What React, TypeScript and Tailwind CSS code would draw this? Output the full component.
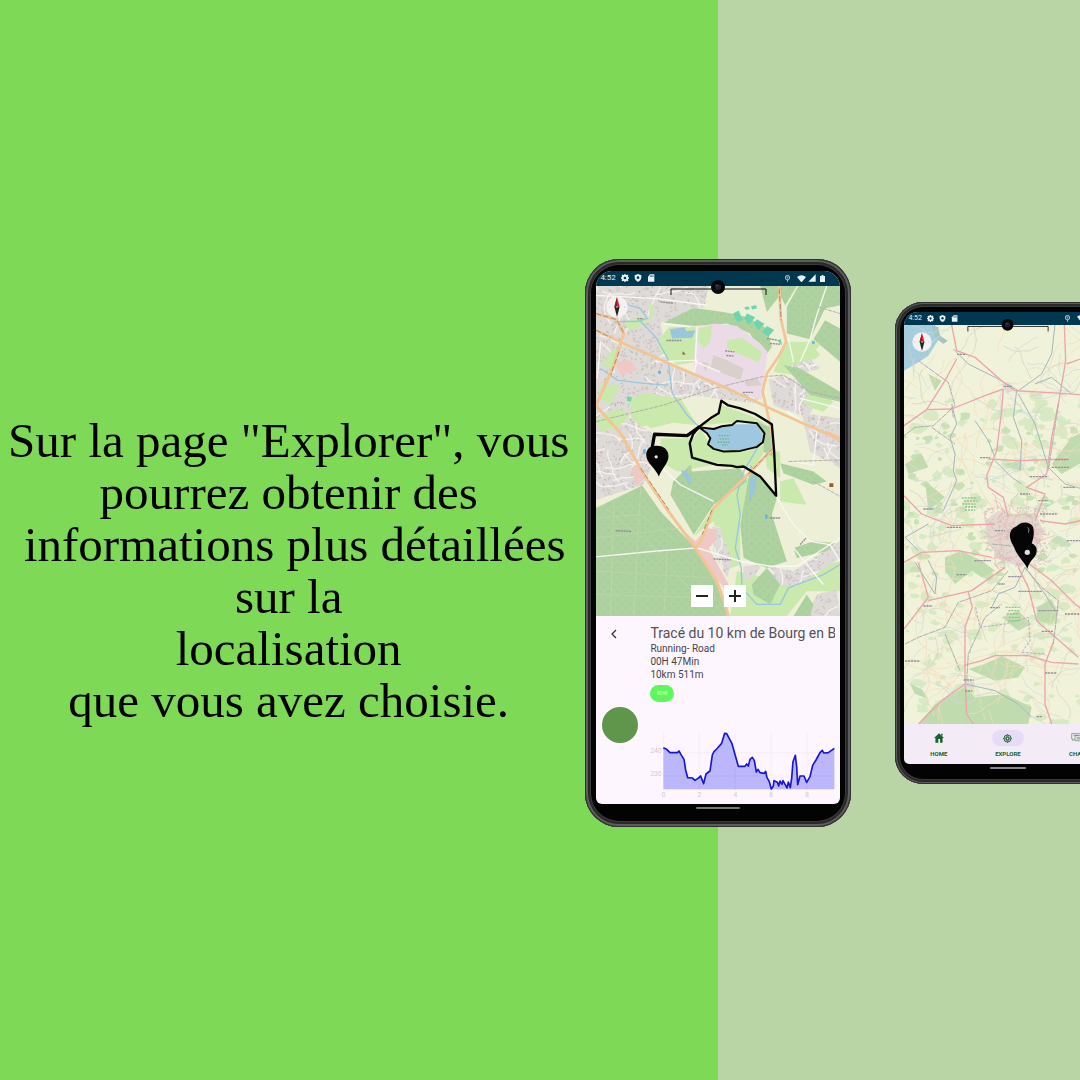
import React from "react";

function makeRandom(seed: number) {
  let s = seed;
  return () => {
    s = (s * 16807) % 2147483647;
    return s / 2147483647;
  };
}

function speckles(seed: number, count: number, x: number, y: number, w: number, h: number, size: number) {
  const r = makeRandom(seed);
  let d = "";
  for (let i = 0; i < count; i++) {
    const px = x + r() * w;
    const py = y + r() * h;
    const a = r() * 6.28;
    const l = size * (0.5 + r());
    d += `M${px.toFixed(0)} ${py.toFixed(0)}l${(Math.cos(a) * l).toFixed(0)} ${(Math.sin(a) * l).toFixed(0)}`;
  }
  return d;
}

function wanderingLines(seed: number, count: number, x: number, y: number, w: number, h: number, step: number) {
  const r = makeRandom(seed);
  let d = "";
  for (let i = 0; i < count; i++) {
    let px = x + r() * w;
    let py = y + r() * h;
    let a = r() * 6.28;
    d += `M${px.toFixed(0)} ${py.toFixed(0)}`;
    for (let k = 0; k < 7; k++) {
      a += (r() - 0.5) * 1.1;
      px += Math.cos(a) * step;
      py += Math.sin(a) * step;
      d += `L${px.toFixed(0)} ${py.toFixed(0)}`;
    }
  }
  return d;
}

function blobs(seed: number, count: number, x: number, y: number, w: number, h: number, size: number) {
  const r = makeRandom(seed);
  let d = "";
  for (let i = 0; i < count; i++) {
    const cx = x + r() * w;
    const cy = y + r() * h;
    const s = size * (0.4 + r());
    for (let k = 0; k < 8; k++) {
      const a = (k / 8) * 6.28;
      const m = s * (0.5 + r() * 0.7);
      d += `${k ? "L" : "M"}${(cx + Math.cos(a) * m * 1.4).toFixed(0)} ${(cy + Math.sin(a) * m).toFixed(0)}`;
    }
    d += "Z";
  }
  return d;
}

const TOWN =
  "M46 102H385L372 165 240 214 262 330 345 368 540 440 520 455 330 430 200 470 46 510Z M46 500L90 490 150 500 215 545 215 640 190 700 46 745Z M565 385L600 372 650 385 690 420 670 450 620 478 580 460Z M625 345L700 320 720 350 660 365Z M665 485L780 500V650L690 600Z M565 945L640 960 780 870V920L650 1005 590 1000Z M395 820L420 830 455 930 440 980 400 900Z M490 945L545 940 520 980 490 990Z M680 1095L710 1030 770 1015 780 1095Z M590 460L650 440 700 470 680 500Z";

const WOODS =
  "M250 212L340 168 430 180 500 195 560 230 575 285 550 320 510 245 440 215 340 222Z M540 102H650L615 160 600 130 560 180Z M620 165L655 102H780V160L735 170 690 262 620 245Z M735 205L780 230V330L700 262Z M46 770L185 702 240 780 345 890 405 990 445 1095H46Z M278 690L330 640 335 660 480 650 500 690 400 760 340 850 270 730Z M480 820L510 650 545 680 590 740 575 790 620 930 560 950 490 920Z M530 510L578 530 585 620 550 600 550 550Z M610 340L660 350 780 420V450L690 430Z M600 635L700 660 740 690 700 700 610 665Z M640 890L700 870 765 875 740 900 650 920Z M515 1000L560 950 600 1000 570 1060 520 1030Z M640 1095L680 1030 700 1060 690 1095Z";

const LAWN =
  "M150 490L190 440 300 440 345 520 250 510 160 530Z M46 400L120 395 90 470 60 460Z M60 345L100 290 120 300 100 350Z M230 270L270 225 345 225 350 310 260 330Z M120 215L180 190 210 215 150 240Z M200 150L220 160 210 210Z M355 230L390 235 385 280 355 275Z M620 270L690 270 720 310 640 370 580 360Z M240 560L340 560 335 620 400 640 290 660 240 630Z M340 855L480 650 520 700 480 800 480 940 430 960 400 810Z M330 575L360 530 390 580 500 600 575 570 520 650 430 640 340 620Z M600 690L640 680 680 760 600 750Z M470 960L560 980 780 930V1020L680 1020 620 1095H450Z M640 450L700 410 760 450 730 480Z M555 600L600 600 600 680 560 650Z M690 260L720 280 700 300Z M370 520L415 490 425 460 530 500 560 520 480 510Z";

function TrailMap() {
  return (
    <svg viewBox="46 102 734 993" className="block h-auto w-full" role="img" aria-label="Carte du tracé">
      <defs>
        <clipPath id="town-clip">
          <path d={TOWN} />
        </clipPath>
        <pattern id="wood-dots" width="26" height="26" patternUnits="userSpaceOnUse">
          <rect width="26" height="26" fill="#add19f" />
          <path d="M4 6h4M17 18h4" stroke="#9cc592" strokeWidth="3" />
        </pattern>
      </defs>
      <rect x="46" y="102" width="734" height="993" fill="#edf0d6" />
      <path d={LAWN} fill="#c9e9ad" />
      <path d={TOWN} fill="#dedad8" />
      <g clipPath="url(#town-clip)" fill="none">
        <path d={speckles(7, 2500, 46, 102, 734, 993, 8)} stroke="#cdc6c3" strokeWidth="4" />
        <path d={wanderingLines(15, 190, 46, 102, 734, 993, 15)} stroke="#f4f1ee" strokeWidth="4" />
        <path d={speckles(21, 700, 46, 102, 734, 993, 5)} stroke="#b7aeac" strokeWidth="3" />
      </g>
      <path d="M46 505L110 470 150 490 110 530 60 540Z M150 440L195 425 300 440 350 520 290 510 210 530 150 480Z M55 400L120 398 90 460 55 440Z M60 340L100 290 115 300 95 350Z M235 265L265 225 345 225 350 330 290 340 240 300Z M125 215L180 190 205 210 150 235Z M205 150L220 165 208 215Z" fill="#c9e9ad" />
      <path d="M100 330L150 325 170 355 120 370Z M150 650L170 640 190 680 170 705Z M300 830L345 870 380 830 410 835 405 870 385 890 445 1000 430 1010 350 900Z" fill="#efc9c6" />
      <path d={WOODS} fill="url(#wood-dots)" />
      <path d="M345 228L400 215 470 222 540 275 562 300 550 400 545 445 420 400 340 368Z" fill="#ebdbe7" />
      <path d="M400 310L440 325 490 350 480 385 390 350Z M490 385L530 380 545 400 500 405Z M365 330L385 335 375 360Z" fill="#d9cfcb" />
      <path d="M355 230L395 220 390 270 370 290 352 265Z M440 265L485 258 545 300 535 332 440 290Z" fill="#c9e9ad" />
      <path d="M268 232L312 226 318 238 345 235 335 258 275 260Z M300 655L318 660 335 685 325 700Z M510 680L530 670 525 720 505 758Z M510 640L520 650 512 665Z" fill="#9ac5dc" />
      <path d="M362 530L410 532 460 518 530 518 550 550 535 582 470 598 405 590 388 575 390 555Z" fill="#9ec8df" />
      <path d="M415 552h34M418 562h28M412 572h40M425 580h18" stroke="#6db389" strokeWidth="4" strokeDasharray="5 3" />
      <g fill="#6ed6ae">
        <path d="M458 185L475 176 488 204 470 210Z M500 185L525 196 507 218 492 200Z M530 202L553 216 535 235 520 215Z M560 222L582 234 565 254 545 240Z M590 265L602 262 606 280Z M492 167l12-4 5 8-12 3z M512 162l16-2 2 10-14 3z M140 434l14 2-3 14-12-3z" />
      </g>
      <g fill="none" stroke="#9ac6de" strokeWidth="4">
        <path d="M60 350L110 385 190 395 262 400M175 203L225 255 262 320 275 425 320 490 360 530M130 155L180 170 200 200 170 208 100 210" />
        <path d="M545 565L525 600 490 660 470 730 480 790 465 890 483 950 485 1010 530 1060 600 1060 625 1010 730 970 780 940" />
      </g>
      <g fill="none" stroke="#f8f8f4" strokeWidth="4">
        <path d="M46 917L220 900 350 890 480 930 570 945 650 945 780 860" />
        <path d="M588 735L640 820 690 870 750 880 780 930M640 890L730 1000M740 102L710 190 690 262 660 330M245 650L300 700 400 750M250 215L330 225M620 480L710 540 700 640 640 630M640 330L625 260" />
        <path d="M225 330L350 325 340 368M350 225L345 330 420 360M660 440L780 470M46 130L230 140 380 160M60 270L50 380" />
      </g>
      <g fill="none" stroke="#c3d8ab" strokeWidth="2">
        <path d="M46 800L180 790 290 870M100 740L90 1095M180 710L160 1095M46 960L390 980M260 900L250 1095M46 1030L410 1040M46 860L300 830M60 760L210 880 370 1060" />
      </g>
      <path d="M46 510L250 460 400 410 545 375 610 370 690 420 780 440M625 630L780 625M700 690L780 735M715 165L780 185" fill="none" stroke="#b2aea4" strokeWidth="3" strokeDasharray="12 3" />
      <g fill="none" stroke="#f3c494" strokeLinejoin="round">
        <path d="M46 235L130 275 300 350 430 405 580 475 680 520 780 565" strokeWidth="8" />
        <path d="M46 185L108 203 130 245 100 340 46 462 120 545 190 670 260 775 345 890 410 990 445 1095" strokeWidth="9" />
        <path d="M597 102L602 200 618 270 598 310 560 365 547 420 568 510 580 590 500 672 400 770 370 850 348 890M735 540L780 560" strokeWidth="8" />
      </g>
      <path d="M46 185L108 203 130 245M115 300L90 370M180 650L265 775M597 110L603 205M578 590L500 672M395 775L365 850M46 235L90 257" fill="none" stroke="#a98d6c" strokeWidth="3" strokeDasharray="16 7" />
      <path d="M434 297l28 3M438 311l22 2M258 266h45M560 260l32 5M570 275l30 2M400 923l52 3M105 838l48 2M570 800h32M488 422h30M170 200h18M240 150l40 4M660 880l18-20" fill="none" stroke="#908893" strokeWidth="4" strokeDasharray="6 2" />
      <path d="M307 298l9 10h-10z M748 695h12v12h-12z" fill="#9b5b2c" />
      <path d="M233 358h8v8h-8zM696 268h8v8h-8zM188 593h7v14h-7zM555 790h7v12h-7z" fill="#5fb1ec" />
      <g fill="none" stroke="#050505" strokeLinejoin="round" strokeLinecap="round">
        <path d="M213 600L222 548 320 552 355 527" strokeWidth="10" />
        <path d="M355 527L390 500 415 485 423 447 442 460 480 470 525 487 575 518 582 600 588 733 540 675 490 645 470 647 455 643 410 640 335 618 328 575 338 548 355 527" strokeWidth="7" />
        <path d="M355 527L400 532 425 524 455 520 470 508 530 515 553 545 548 572 530 586 480 598 430 600 400 592 383 578 390 560 380 545 360 530" strokeWidth="6" />
      </g>
      <path d="M235 675C225 650 197 635 197 610C197 595 207 583 222 583C248 580 265 594 264 616C263 637 245 650 235 675Z" fill="#050505" />
      <circle cx="227" cy="616" r="5" fill="#dbe9db" />
    </svg>
  );
}

function RegionMap() {
  return (
    <svg viewBox="57 93 621 1197" className="block h-auto w-full" role="img" aria-label="Carte de la région">
      <rect x="57" y="93" width="621" height="1197" fill="#f0f2da" />
      <path d={blobs(33, 210, 57, 300, 621, 990, 14)} fill="#d7eac3" />
      <path d={blobs(12, 100, 57, 350, 621, 500, 10)} fill="#c7e1b5" />
      <path d="M180 790L230 770 290 800 330 830 290 850 260 830 210 870 180 830Z M300 1110L350 1085 420 1120 400 1150 330 1160 250 1125Z M150 1230L240 1180 270 1210 360 1200 440 1240 430 1290H100Z M455 940L500 915 520 960 500 990 455 980Z M500 510L560 430 600 410 640 450 600 500 530 540Z M355 510L410 500 410 530 370 520Z M75 1170L110 1185 130 1215 90 1200Z M130 240L170 260 150 290Z M60 510L110 480 130 520 70 540Z M350 970L400 950 440 990 400 1010Z M120 560L180 610 130 650Z" fill="#c0dcae" />
      <path d="M57 93H150L165 130 130 185 100 205 57 230Z" fill="#a4cedd" />
      <path d="M140 93L150 130 175 150 188 140 165 125 160 100" fill="#a4c4c7" />
      <path d={wanderingLines(5, 190, 57, 93, 621, 1197, 20)} fill="none" stroke="#f3ddbb" strokeWidth="2" />
      <path d={wanderingLines(91, 75, 57, 93, 621, 1197, 17)} fill="none" stroke="#c8ddd8" strokeWidth="2" />
      <path d={wanderingLines(47, 55, 57, 93, 621, 1197, 16)} fill="none" stroke="#d2d0c4" strokeWidth="2" />
      <path d="M300 680L340 650 400 670 450 655 475 710 455 780 410 820 350 800 310 750Z M350 270L370 265 390 285 365 300Z M240 1160L270 1165 265 1185 240 1180Z" fill="#e3d8cf" />
      <path d={speckles(71, 280, 290, 640, 200, 185, 11)} stroke="#cfb8b3" strokeWidth="2" />
      <path d={wanderingLines(63, 24, 310, 655, 150, 150, 11)} fill="none" stroke="#ecb2b0" strokeWidth="2" />
      <g fill="none" stroke="#a1b8bb" strokeWidth="3" strokeLinejoin="round">
        <path d="M205 165L250 210 330 250 400 290 470 240 500 180 510 93M395 290L385 370 410 440 405 530M200 330L215 390 195 430 210 480 205 530 215 560 175 650M330 500L380 550 410 570M320 940L340 900 390 880 420 820 480 900 510 950M90 805L150 900 155 850 130 800M240 1170L330 1190 400 1230 440 1270M100 770L60 730 130 690M400 300L450 390 490 520 540 570 610 590M450 270L500 250 560 300M270 380L310 440 330 490" />
      </g>
      <g fill="none" stroke="#eca5aa" strokeWidth="4" strokeLinejoin="round">
        <path d="M200 93L215 170 270 190 350 260 390 290 480 295 678 308M57 395L125 347 200 345 300 305 355 285M125 347L180 260 215 195M355 285L350 350 335 470 305 545 310 580 355 610 370 670M538 93L542 200 520 330 500 430 485 540 425 580 480 600 450 680M310 495L400 500 550 495M57 605L110 660 200 695 330 690M100 805L130 910 57 1005M57 805L110 775 220 770 320 790M130 920L260 890 360 820M250 895L262 940 240 1000 240 1150 245 1260 265 1290M100 1290L170 1220 240 1170M235 1115L290 1100 330 1085 430 1085 500 1105 580 1110M400 820L430 880 455 980 500 1020 580 1090M505 1045L480 1110 480 1230 500 1290M420 800L500 860 570 930 678 1010M465 680L540 690 678 660M545 210L600 190" />
      </g>
      <g fill="none" stroke="#b3aeab" strokeWidth="3">
        <path d="M100 200L190 265 210 335 145 395 90 400 57 425M200 340L205 370M60 1050L100 1030 180 1000 220 925 320 890 370 830M245 1160L250 1080 300 970 350 930M505 1050L520 920 470 880 420 820M140 400L210 450M180 1020L225 1130M520 330L490 530M320 750L420 760" strokeDasharray="18 2" />
      </g>
      <path d="M272 940L285 1000 360 990 430 970 435 1040 410 1075 480 1080" fill="none" stroke="#c3a7c5" strokeWidth="3" strokeDasharray="8 4" />
      <path d="M216 181h28M356 277h26M285 491h30M115 645h30M185 700h45M330 710h30M435 548h55M500 520h54M510 497h40M405 600h30M465 660h50M400 892h70M460 950h60M540 960h45M315 941h30M60 1101h45M115 936h28M215 842h30M236 1158h30M240 1191h22M470 1012h35M480 1137h35M455 1268h18M370 848h40M268 800h50M545 740h40M340 870h20M535 580h34M460 620h30" fill="none" stroke="#96929a" strokeWidth="4" strokeDasharray="7 2" />
      <path d="M230 612h42M237 621h38M232 630h40M240 639h32M240 648h30M362 940h45M370 950h34M365 960h38M372 970h32M370 980h34" fill="none" stroke="#8fc489" strokeWidth="4" strokeDasharray="6 3" />
      <path d="M427 824C418 803 398 790 386 757C368 730 372 705 395 697C405 684 432 680 443 697C450 712 445 735 440 748C458 755 460 775 446 792C436 802 431 812 427 824Z" fill="#050505" />
      <path d="M428 700q7 6 2 16" fill="none" stroke="#cacac6" strokeWidth="2" />
      <circle cx="427" cy="775" r="8" fill="#e2ddda" />
    </svg>
  );
}

function StatusBar({ small = false }: { small?: boolean }) {
  return (
    <div
      className={
        small
          ? "flex h-[13px] items-center justify-between bg-[#003850] px-1 text-[7px] text-[#e8f2f5]"
          : "flex h-[15px] items-center justify-between bg-[#003850] px-1 text-[8px] text-[#e8f2f5]"
      }
    >
      <div className="flex items-center gap-[5px]">
        <span className="leading-none">4:52</span>
        <svg viewBox="0 0 24 24" className={small ? "w-[7px]" : "w-2"} fill="none" stroke="currentColor">
          <circle cx="12" cy="12" r="7" strokeWidth="6" />
          <path d="M12 0v4M12 20v4M0 12h4M20 12h4M3 3l4 4M17 17l4 4M3 21l4-4M17 7l4-4" strokeWidth="4" />
        </svg>
        <svg viewBox="0 0 24 24" className={small ? "w-[7px]" : "w-2"}>
          <path d="M12 0L22 4V12Q21 20 12 24Q3 20 2 12V4Z" fill="currentColor" />
          <circle cx="12" cy="11" r="4" fill="#003850" />
        </svg>
        <svg viewBox="0 0 24 24" className={small ? "w-[7px]" : "w-2"}>
          <path d="M9 1H22V23H3V8Z" fill="currentColor" />
          <path d="M10 4v5M14 4v5M18 4v5" stroke="#003850" strokeWidth="2" />
        </svg>
      </div>
      <div className={small ? "flex items-center gap-[2px] pr-1" : "flex items-center gap-[2px] pr-[11px]"}>
        <svg viewBox="0 0 24 24" className="mr-1 w-[7px] opacity-70" fill="none" stroke="currentColor">
          <path d="M12 23V17C1 13 4 2 12 2S23 13 12 17" strokeWidth="4" />
          <circle cx="12" cy="9" r="2" fill="currentColor" />
        </svg>
        <svg viewBox="0 0 24 20" className={small ? "w-2" : "w-[9px]"}>
          <path d="M0 5Q12-4 24 5L12 20Z" fill="currentColor" />
        </svg>
        <svg viewBox="0 0 24 24" className={small ? "w-[7px]" : "w-2"}>
          <path d="M23 1V23H1Z" fill="currentColor" />
        </svg>
        <svg viewBox="0 0 16 24" className="ml-[2px] w-[5px]">
          <path d="M5 0H11V3H16V24H0V3H5Z" fill="currentColor" />
        </svg>
      </div>
    </div>
  );
}

function Compass({ small = false }: { small?: boolean }) {
  return (
    <svg
      viewBox="0 0 66 66"
      className={small ? "absolute left-2 top-[7px] w-5" : "absolute left-[10px] top-[10px] w-[22px]"}
      role="img"
      aria-label="Boussole"
    >
      <circle cx="33" cy="33" r="32" fill="#f2f2f1" />
      <path d="M8 33h4M54 33h4" stroke="#ccc" strokeWidth="3" />
      <path d="M33 3L41 32H25Z" fill="#d8282b" />
      <path d="M33 3L33 32H25Z" fill="#951b20" />
      <path d="M33 63L41 32H25Z" fill="#222" />
      <circle cx="33" cy="33" r="3" fill="#999" />
    </svg>
  );
}

function CameraAndScale({ small = false }: { small?: boolean }) {
  return (
    <div className="absolute inset-x-0 -top-[7px] flex justify-center">
      <svg viewBox="0 0 97 17" className={small ? "w-[82px]" : "w-[97px]"}>
        <path d="M1 16V10H96V16" fill="none" stroke="#111" strokeWidth="1" />
        <circle cx="48" cy="8" r="7" fill="#060708" />
        <circle cx="48" cy="8" r="3" fill="#1c2233" />
        <path d="M46 7l2-1" stroke="#505b7c" strokeWidth="1" />
      </svg>
    </div>
  );
}

const PROFILE =
  "M250 443L260 448 270 458 292 458 297 453 303 464 312 478 317 510 323 533 337 534 345 541 354 535 362 528 371 551 378 522 390 513 397 465 402 455 410 447 425 430 434 400 440 401 456 431 475 499 495 499 500 492 505 498 510 478 517 472 523 482 529 516 534 508 540 518 553 520 557 514 561 533 568 545 574 567 580 558 582 542 592 547 596 558 600 543 606 553 609 542 617 556 621 564 625 546 631 563 635 535 639 485 646 466 650 500 653 554 660 528 672 528 680 547 690 530 698 496 708 480 720 458 727 451 731 459 745 458 763 445";

function ElevationChart() {
  return (
    <svg viewBox="210 390 555 210" className="block h-auto w-full" role="img" aria-label="Profil d'altitude">
      <path d="M250 458H763M250 528H763M251 395V568M358 395V568M466 395V568M574 395V568M681 395V568" stroke="#f1ebf4" strokeWidth="2" />
      <path d={PROFILE + "V568H250Z"} fill="#bcb7fd" />
      <path d="M466 500V568M358 530V568M574 566V568M681 546V568M250 528H325M378 528H560M690 528H763" stroke="#b1adf0" strokeWidth="2" />
      <path d={PROFILE} fill="none" stroke="#1715d8" strokeWidth="5" strokeLinejoin="round" />
      <g fill="#d0cad2" fontSize="20" textAnchor="middle" fontFamily="Roboto, sans-serif">
        <text x="228" y="458">240</text>
        <text x="228" y="527">230</text>
        <text x="251" y="592">0</text>
        <text x="358" y="592">2</text>
        <text x="466" y="592">4</text>
        <text x="573" y="592">6</text>
        <text x="681" y="592">8</text>
      </g>
    </svg>
  );
}

function ExplorePhone() {
  return (
    <div className="w-[266px] shrink-0 rounded-[34px] bg-[#030303] px-[11px] pt-3 shadow-[inset_0_0_0_1px_#303030,inset_0_0_0_3px_#5d5d5d,inset_0_0_0_5px_#292929,inset_0_0_0_6px_#3b3b3b]">
      <div className="overflow-hidden rounded-t-[16px] rounded-b-[6px] bg-[#fdf6ff]">
        <StatusBar />
        <div className="relative">
          <TrailMap />
          <CameraAndScale />
          <Compass />
          <div className="absolute inset-x-0 bottom-[9px] flex justify-center gap-[11px]">
            <button aria-label="Zoom arrière" className="flex size-[22px] items-center justify-center bg-white">
              <svg viewBox="0 0 14 14" className="w-[14px]"><path d="M1 7H13" stroke="#222" strokeWidth="2" /></svg>
            </button>
            <button aria-label="Zoom avant" className="flex size-[22px] items-center justify-center bg-white">
              <svg viewBox="0 0 14 14" className="w-[14px]"><path d="M1 7H13M7 1V13" stroke="#222" strokeWidth="2" /></svg>
            </button>
          </div>
        </div>
        <div className="grid grid-cols-[54px_1fr] pb-1 pr-[5px] pt-2">
          <div className="flex flex-col items-start">
            <button aria-label="Retour" className="ml-3 flex h-5 w-3 items-center justify-center">
              <svg viewBox="0 0 8 10" className="w-2" fill="none" stroke="#333"><path d="M6 1L2 5L6 9" strokeWidth="1.3" /></svg>
            </button>
            <button aria-label="Démarrer le parcours" className="ml-[6px] mt-[63px] size-9 rounded-full bg-[#5f964b]" />
          </div>
          <div className="min-w-0">
            <h2 className="overflow-hidden whitespace-nowrap text-[14px] leading-[18px] text-[#555058]">Tracé du 10 km de Bourg en B</h2>
            <p className="text-[10px] leading-[13px] text-[#48434b]">Running- Road</p>
            <p className="text-[10px] leading-[13px] text-[#48434b]">00H 47Min</p>
            <p className="text-[10px] leading-[13px] text-[#48434b]">10km 511m</p>
            <span className="mt-1 flex h-[17px] w-6 items-center justify-center rounded-full bg-[#5cf95c] text-[7px] text-[#d8ffd8]">low</span>
            <div className="mt-7">
              <ElevationChart />
            </div>
          </div>
        </div>
      </div>
      <div className="flex h-[23px] justify-center pt-[3px]">
        <div className="h-[2px] w-11 rounded-full bg-[#777]" />
      </div>
    </div>
  );
}

function NavButton({ label, active = false, children }: { label: string; active?: boolean; children: React.ReactNode }) {
  return (
    <button className="flex flex-1 flex-col items-center pt-[6px] text-[#17632b]">
      <span className={active ? "flex h-4 w-8 items-center justify-center rounded-full bg-[#e7dcf8]" : "flex h-4 w-8 items-center justify-center"}>
        {children}
      </span>
      <span className="mt-[3px] text-[6px] font-bold leading-[10px]">{label}</span>
    </button>
  );
}

function RegionPhone() {
  return (
    <div className="w-[225px] shrink-0 rounded-[28px] bg-[#030303] px-[9px] pt-[10px] shadow-[inset_0_0_0_1px_#303030,inset_0_0_0_2px_#5d5d5d,inset_0_0_0_4px_#292929,inset_0_0_0_5px_#3b3b3b]">
      <div className="overflow-hidden rounded-t-[14px] rounded-b-[5px] bg-[#f3ecf7]">
        <StatusBar small />
        <div className="relative">
          <RegionMap />
          <CameraAndScale small />
          <Compass small />
        </div>
        <nav className="flex h-10">
          <NavButton label="HOME">
            <svg viewBox="0 0 28 28" className="w-[10px]" fill="#17632b">
              <path d="M14 1L28 14H24V27H17V17H12V27H4V14H0Z M20 2H24V8L20 6Z" />
            </svg>
          </NavButton>
          <NavButton label="EXPLORE" active>
            <svg viewBox="0 0 28 28" className="w-[9px]" fill="none" stroke="#17632b">
              <circle cx="14" cy="14" r="11" strokeWidth="3" />
              <circle cx="14" cy="14" r="5" strokeWidth="4" />
              <path d="M14 0V5M14 23V28M0 14H5M23 14H28" strokeWidth="2" />
            </svg>
          </NavButton>
          <NavButton label="CHAT">
            <svg viewBox="0 0 36 28" className="w-3" fill="none" stroke="#588760" strokeWidth="2">
              <path d="M29 8V2H2V18H6V23L11 18M12 8H34V23H29V27L25 23H12ZM7 7H23M17 14H29M17 18H29" />
            </svg>
          </NavButton>
        </nav>
      </div>
      <div className="flex h-5 justify-center pt-[3px]">
        <div className="h-[2px] w-9 rounded-full bg-[#888]" />
      </div>
    </div>
  );
}

export default function App() {
  return (
    <main className="flex min-h-screen items-center overflow-hidden bg-[linear-gradient(to_right,#7ed957_66.5%,#b9d5a5_66.5%)] pt-[6px] font-[Roboto,sans-serif]">
      <h1 className="mt-14 min-w-0 flex-1 whitespace-nowrap text-center font-['Liberation_Serif',serif] text-[49px] leading-[52px] text-black">
        Sur la page "Explorer", vous
        <br />
        pourrez obtenir des
        <br />
        <span className="pl-3">informations plus détaillées</span>
        <br />
        sur la
        <br />
        localisation
        <br />
        que vous avez choisie.
      </h1>
      <div className="ml-2 flex w-[45.8%] shrink-0 items-center gap-11">
        <ExplorePhone />
        <RegionPhone />
      </div>
    </main>
  );
}
